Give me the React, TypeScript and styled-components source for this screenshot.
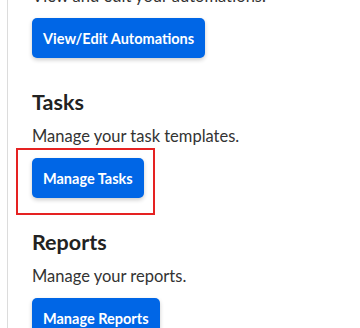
import React from 'react';
import styled, { createGlobalStyle } from 'styled-components';

const GlobalStyle = createGlobalStyle`
  html, body {
    margin: 0;
    padding: 0;
    background: #ffffff;
  }
  body {
    font-family: Lato, "Noto Sans", sans-serif;
    overflow: hidden;
  }
`;

type Section = {
  title?: string;
  description: string;
  action: string;
  highlighted?: boolean;
};

const sections: Section[] = [
  { description: 'View and edit your automations.', action: 'View/Edit Automations' },
  { title: 'Tasks', description: 'Manage your task templates.', action: 'Manage Tasks', highlighted: true },
  { title: 'Reports', description: 'Manage your reports.', action: 'Manage Reports' }
];

const App: React.FC = () => (
  <>
    <GlobalStyle />
    <Page>
      <Content>
        {sections.map((section) => (
          <Block key={section.action}>
            {section.title && <Title>{section.title}</Title>}
            <Description>{section.description}</Description>
            <ButtonSlot $highlighted={section.highlighted}>
              <ActionButton type="button">{section.action}</ActionButton>
            </ButtonSlot>
          </Block>
        ))}
      </Content>
    </Page>
  </>
);

export default App;

const Page = styled.div`
  margin-left: 7px;
  height: 328px;
  border-left: 1px solid #dcdcdc;
  overflow: hidden;
`;

const Content = styled.div`
  margin-top: -15px;
  padding-left: 24px;
  display: flex;
  flex-direction: column;
  gap: 30px;
`;

const Block = styled.section`
  display: flex;
  flex-direction: column;
  align-items: flex-start;
`;

const Title = styled.h2`
  margin: 0 0 9px;
  font-size: 21.5px;
  line-height: 28px;
  font-weight: 700;
  color: #222222;
`;

const Description = styled.p`
  margin: 0 0 11px;
  font-size: 16.5px;
  line-height: 22px;
  color: #333333;
`;

const ButtonSlot = styled.div<{ $highlighted?: boolean }>`
  position: relative;

  &::after {
    content: '';
    display: ${({ $highlighted }) => ($highlighted ? 'block' : 'none')};
    position: absolute;
    top: -10px;
    left: -16px;
    right: -11px;
    bottom: -17px;
    border: 2px solid #e52222;
    pointer-events: none;
  }
`;

const ActionButton = styled.button`
  height: 40px;
  padding: 0 11px;
  border: none;
  border-radius: 5px;
  background: #0066e6;
  color: #ffffff;
  font-family: Lato, "Noto Sans", sans-serif;
  font-size: 14.5px;
  font-weight: 700;
  box-shadow: 0 2px 4px rgba(0, 0, 0, 0.2);
  cursor: pointer;
`;
